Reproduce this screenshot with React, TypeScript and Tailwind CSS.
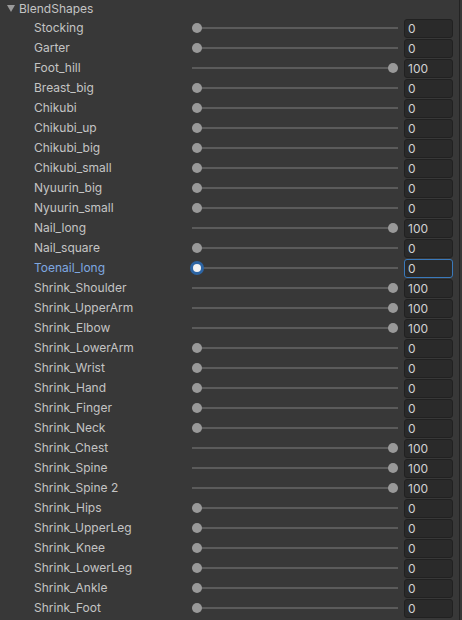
import React from "react";

const rows: [string, number][] = [
  ["Stocking", 0],
  ["Garter", 0],
  ["Foot_hill", 100],
  ["Breast_big", 0],
  ["Chikubi", 0],
  ["Chikubi_up", 0],
  ["Chikubi_big", 0],
  ["Chikubi_small", 0],
  ["Nyuurin_big", 0],
  ["Nyuurin_small", 0],
  ["Nail_long", 100],
  ["Nail_square", 0],
  ["Toenail_long", 0],
  ["Shrink_Shoulder", 100],
  ["Shrink_UpperArm", 100],
  ["Shrink_Elbow", 100],
  ["Shrink_LowerArm", 0],
  ["Shrink_Wrist", 0],
  ["Shrink_Hand", 0],
  ["Shrink_Finger", 0],
  ["Shrink_Neck", 0],
  ["Shrink_Chest", 100],
  ["Shrink_Spine", 100],
  ["Shrink_Spine 2", 100],
  ["Shrink_Hips", 0],
  ["Shrink_UpperLeg", 0],
  ["Shrink_Knee", 0],
  ["Shrink_LowerLeg", 0],
  ["Shrink_Ankle", 0],
  ["Shrink_Foot", 0],
];

function Row({ name, value, focused }: { name: string; value: number; focused?: boolean }) {
  const left = value * 1.96;
  return (
    <div className="flex h-[20px] items-center">
      <div
        className={
          "w-[192px] shrink-0 pl-[34px] text-[12px] leading-[20px] whitespace-nowrap " +
          (focused ? "text-[#7fa8e0]" : "text-[#c4c4c4]")
        }
      >
        {name}
      </div>
      <div className="relative h-[20px] w-[206px] shrink-0">
        <div className="absolute left-0 right-0 top-[9px] h-[2px] bg-[#5b5b5b]" />
        {focused ? (
          <div
            className="absolute top-[3px] h-[14px] w-[14px] rounded-full bg-[#2c64a3] flex items-center justify-center"
            style={{ left: left - 2 }}
          >
            <div className="h-[8px] w-[8px] rounded-full bg-[#f2f2f2]" />
          </div>
        ) : (
          <div
            className="absolute top-[5px] h-[10px] w-[10px] rounded-full bg-[#999999]"
            style={{ left }}
          />
        )}
      </div>
      <div
        className={
          "ml-[6px] h-[19px] w-[49px] shrink-0 rounded-[3px] border bg-[#2a2a2a] pl-[3px] text-[12px] leading-[17px] text-[#d2d2d2] " +
          (focused ? "border-[#3a79bb]" : "border-[#212121]")
        }
      >
        {value}
      </div>
    </div>
  );
}

export default function App() {
  return (
    <div
      className="relative h-[620px] w-[462px] overflow-hidden bg-[#383838]"
      style={{ fontFamily: "Inter, 'Noto Sans', sans-serif" }}
    >
      <div className="absolute right-[2px] top-0 bottom-0 w-[1px] bg-[#232323]" />
      <div className="flex h-[18px] items-start pt-[1px]">
        <svg width="8" height="7" viewBox="0 0 8 7" className="ml-[7px] mr-[4px] mt-[4px]">
          <polygon points="0,0 8,0 4,7" fill="#9a9a9a" />
        </svg>
        <span className="text-[12px] leading-[15px] text-[#c4c4c4]">BlendShapes</span>
      </div>
      {rows.map(([n, v]) => (
        <Row key={n} name={n} value={v} focused={n === "Toenail_long"} />
      ))}
    </div>
  );
}
